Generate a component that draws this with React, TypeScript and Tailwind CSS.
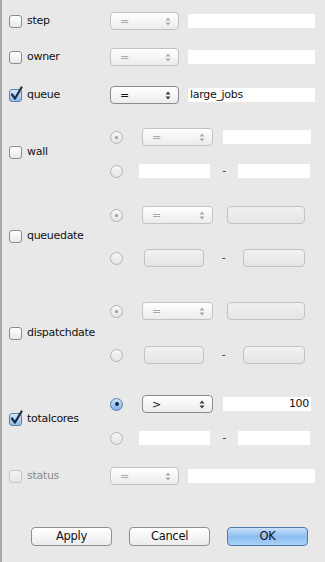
import React from "react";

const Arrows = ({ dim }: { dim?: boolean }) => (
    <svg width="6" height="9" viewBox="0 0 6 9" className={dim ? "opacity-40" : ""}>
        <path d="M0.5 3.5 L3 0.5 L5.5 3.5Z M0.5 5.5 L3 8.5 L5.5 5.5Z" fill="#3a3a3a" />
    </svg>
);

const Checkbox = ({ checked, dim }: { checked?: boolean; dim?: boolean }) => (
    <div className="relative w-[13px] h-[13px] shrink-0">
        <div
            className={
                checked
                    ? "w-[13px] h-[13px] rounded-[3px] border border-[#5c7fa8] bg-gradient-to-b from-[#d7e8fb] to-[#8fbbec]"
                    : dim
                    ? "w-[13px] h-[13px] rounded-[3px] border border-[#c4c4c4] bg-gradient-to-b from-[#f4f4f4] to-[#e6e6e6]"
                    : "w-[13px] h-[13px] rounded-[3px] border border-[#8c8c8c] bg-gradient-to-b from-[#ffffff] to-[#e9e9e9]"
            }
        />
        {checked && (
            <svg width="16" height="16" viewBox="0 0 16 16" className="absolute left-[0px] top-[-3px]">
                <path d="M3 8.5 L6 12.5 L12.5 1.5" fill="none" stroke="#1c2b44" strokeWidth="2.2" strokeLinecap="round" strokeLinejoin="round" />
            </svg>
        )}
    </div>
);

const Radio = ({ on, active }: { on?: boolean; active?: boolean }) => (
    <div
        className={
            active
                ? "w-[13px] h-[13px] rounded-full border border-[#5a7ca6] bg-gradient-to-b from-[#cfe3fa] to-[#7fb0ea] flex items-center justify-center shrink-0"
                : "w-[13px] h-[13px] rounded-full border border-[#b4b4b4] bg-gradient-to-b from-[#f6f6f6] to-[#e4e4e4] flex items-center justify-center shrink-0"
        }
    >
        {on && <div className={active ? "w-[4px] h-[4px] rounded-full bg-[#1d2a3c]" : "w-[3px] h-[3px] rounded-full bg-[#9a9a9a]"} />}
    </div>
);

const Select = ({ value, enabled, w }: { value: string; enabled?: boolean; w: string }) => (
    <div
        className={
            (enabled
                ? "border-[#8a8a8a] text-[#111] "
                : "border-[#c2c2c2] text-[#a8a8a8] ") +
            w +
            " h-[18px] rounded-[4px] border bg-gradient-to-b from-[#ffffff] to-[#ececec] flex items-center justify-between pl-[9px] pr-[7px] shrink-0"
        }
    >
        <span className="leading-none">{value}</span>
        <Arrows dim={!enabled} />
    </div>
);

const Field = ({ w, value, right }: { w: string; value?: string; right?: boolean }) => (
    <div className={w + " h-[14px] bg-white flex items-center px-[2px] shrink-0 text-[#111] " + (right ? "justify-end" : "")}>
        {value}
    </div>
);

const RoundField = ({ w }: { w: string }) => (
    <div className={w + " h-[18px] rounded-[4px] border border-[#c2c2c2] bg-gradient-to-b from-[#f1f1f1] to-[#e5e5e5] shrink-0"} />
);

const Label = ({ children, dim }: { children: React.ReactNode; dim?: boolean }) => (
    <span className={dim ? "text-[#8a8a8a]" : "text-[#111]"}>{children}</span>
);

const SimpleRow = ({ label, checked, value, enabled, text, dim, cls }: any) => (
    <div className={"flex items-center h-[18px] " + cls}>
        <div className="w-[101px] flex items-center gap-[5px]">
            <Checkbox checked={checked} dim={dim} />
            <Label dim={dim}>{label}</Label>
        </div>
        <Select value={value} enabled={enabled} w="w-[69px]" />
        <div className="ml-[9px]">
            <Field w="w-[127px]" value={text} />
        </div>
    </div>
);

const RangeSection = ({ label, checked, rounded, gap, cls, lcls, op, text }: any) => (
    <div className={"flex " + cls}>
        <div className={"w-[101px] flex items-center gap-[5px] " + (lcls || "")}>
            <Checkbox checked={checked} />
            <Label>{label}</Label>
        </div>
        <div className={"flex flex-col " + gap}>
            <div className="flex items-center h-[18px]">
                <Radio on active={checked} />
                <div className="ml-[19px]">
                    <Select value={op} enabled={checked} w="w-[71px]" />
                </div>
                {rounded ? (
                    <div className="ml-[14px]">
                        <RoundField w="w-[78px]" />
                    </div>
                ) : (
                    <div className="ml-[10px]">
                        <Field w="w-[88px]" value={text} right />
                    </div>
                )}
            </div>
            <div className="flex items-center h-[18px]">
                <Radio />
                {rounded ? (
                    <>
                        <div className="ml-[21px]">
                            <RoundField w="w-[60px]" />
                        </div>
                        <span className="w-[39px] text-center text-[#333]">-</span>
                        <RoundField w="w-[62px]" />
                    </>
                ) : (
                    <>
                        <div className="ml-[16px]">
                            <Field w="w-[71px]" />
                        </div>
                        <span className="w-[28px] text-center text-[#333]">-</span>
                        <Field w="w-[72px]" />
                    </>
                )}
            </div>
        </div>
    </div>
);

const Button = ({ children, primary }: { children: React.ReactNode; primary?: boolean }) => (
    <div
        className={
            (primary
                ? "border-[#4f78ad] bg-gradient-to-b from-[#c9e0fa] via-[#8dbdf0] to-[#a9d0f7] "
                : "border-[#8e8e8e] bg-gradient-to-b from-[#ffffff] to-[#ececec] ") +
            "w-[81px] h-[19px] rounded-[4px] border flex items-center justify-center text-[#111] text-[11.5px]"
        }
    >
        {children}
    </div>
);

export default function App() {
    return (
        <div className="w-[325px] h-[562px] bg-[#e8e8e8] border-l-2 border-[#a9a9a9] pl-[7px] pt-[12px] font-['DejaVu_Sans',sans-serif] text-[11px] tracking-[-0.3px] overflow-hidden">
            <SimpleRow label="step" value="=" cls="" />
            <SimpleRow label="owner" value="=" cls="mt-[18px]" />
            <SimpleRow label="queue" value="=" checked enabled text="large_jobs" cls="mt-[20px]" />
            <RangeSection label="wall" op="=" gap="gap-[16px]" cls="mt-[24px]" lcls="pb-[4px]" />
            <RangeSection label="queuedate" op="=" rounded gap="gap-[25px]" cls="mt-[26px]" />
            <RangeSection label="dispatchdate" op="=" rounded gap="gap-[26px]" cls="mt-[35px]" />
            <RangeSection label="totalcores" op=">" checked text="100" gap="gap-[16px]" cls="mt-[31px]" lcls="pb-[4px]" />
            <SimpleRow label="status" value="=" dim cls="mt-[20px]" />
            <div className="flex gap-[17px] ml-[22px] mt-[42px]">
                <Button>Apply</Button>
                <Button>Cancel</Button>
                <Button primary>OK</Button>
            </div>
        </div>
    );
}
